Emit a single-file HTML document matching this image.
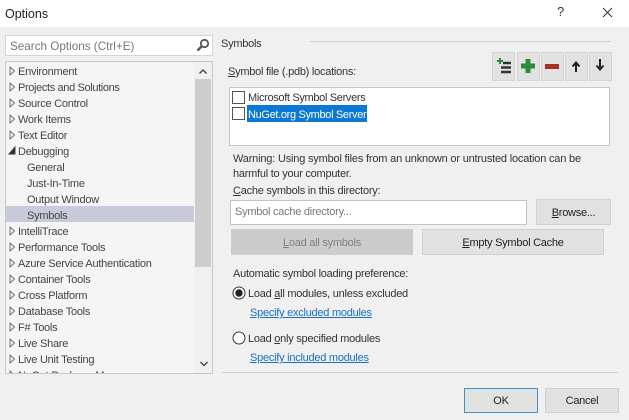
<!DOCTYPE html>
<html><head><meta charset="utf-8">
<style>
html,body{margin:0;padding:0}
body{width:629px;height:420px;position:relative;overflow:hidden;background:#f0f0f0;font-family:"Liberation Sans",sans-serif;font-size:11px;letter-spacing:-.25px;color:#333}
div,a,svg{position:absolute;box-sizing:border-box}
.t{white-space:nowrap;line-height:16px;height:16px;margin-top:1px}
.r{color:#444}
.btn{background:#e1e1e1;border:1px solid #d0d0d0;text-align:center;color:#222}
.tb{top:52px;height:29px;background:#e2e2e2;border:1px solid #d4d4d4}
a{color:#1a6fc0;text-decoration:underline;white-space:nowrap;line-height:16px;margin-top:1px}
u{text-decoration:underline}
</style></head>
<body>
<div style="left:0;top:0;width:629px;height:27px;background:#fff"></div>
<div class="t" style="left:5px;top:5px;font-size:12.5px;color:#222;letter-spacing:0">Options</div>
<div class="t" style="left:557px;top:3px;font-size:13px;color:#333;letter-spacing:0">?</div>
<svg style="left:602px;top:7px" width="11" height="11"><path d="M1 1L10 10M10 1L1 10" stroke="#333" stroke-width="1" fill="none"/></svg>

<div style="left:5px;top:35px;width:208px;height:21px;background:#fff;border:1px solid #d4d4d4"></div>
<div class="t" style="left:10px;top:38px;color:#777;font-size:11.7px;letter-spacing:0">Search Options (Ctrl+E)</div>
<svg style="left:196px;top:38px" width="14" height="14"><circle cx="8.5" cy="5.500" r="3.700" fill="none" stroke="#555" stroke-width="1.800"/><path d="M5.500 8.500L1.500 12.500" stroke="#555" stroke-width="2.400"/></svg>

<div style="left:5px;top:61px;width:208px;height:313px;background:#f5f5f5;border:1px solid #c8c8c8;overflow:hidden" id="tree">
<div style="left:0;top:144px;width:188px;height:16px;background:#c9cbdc"></div>
<div style="left:188px;top:0;width:18px;height:311px;background:#f0f0f0"></div>
<div style="left:189px;top:17px;width:16px;height:188px;background:#cdcdcd"></div>
<svg style="left:192px;top:6px" width="10" height="8"><path d="M1.500 5.500L5 2L8.500 5.500" stroke="#444" stroke-width="1.400" fill="none"/></svg>
<svg style="left:193px;top:298px" width="10" height="8"><path d="M1.500 2L5 5.500L8.500 2" stroke="#444" stroke-width="1.400" fill="none"/></svg>
<svg style="left:1px;top:0" width="12" height="320" fill="#f5f5f5" stroke="#666" stroke-width=".9"><path d="M3 5V13L7.500 9Z"/><path d="M3 21V29L7.500 25Z"/><path d="M3 37V45L7.500 41Z"/><path d="M3 53V61L7.500 57Z"/><path d="M3 69V77L7.500 73Z"/><path d="M8 85V92H2Z" fill="#333" stroke="#333"/><path d="M3 165V173L7.500 169Z"/><path d="M3 181V189L7.500 185Z"/><path d="M3 197V205L7.500 201Z"/><path d="M3 213V221L7.500 217Z"/><path d="M3 229V237L7.500 233Z"/><path d="M3 245V253L7.500 249Z"/><path d="M3 261V269L7.500 265Z"/><path d="M3 277V285L7.500 281Z"/><path d="M3 293V301L7.500 297Z"/><path d="M3 309V317L7.500 313Z"/></svg>
<div class="t r" style="left:12px;top:1px">Environment</div>
<div class="t r" style="left:12px;top:17px;letter-spacing:-.36px">Projects and Solutions</div>
<div class="t r" style="left:12px;top:33px">Source Control</div>
<div class="t r" style="left:12px;top:49px">Work Items</div>
<div class="t r" style="left:12px;top:65px">Text Editor</div>
<div class="t r" style="left:12px;top:81px">Debugging</div>
<div class="t r" style="left:21px;top:97px">General</div>
<div class="t r" style="left:21px;top:113px">Just-In-Time</div>
<div class="t r" style="left:21px;top:129px">Output Window</div>
<div class="t r" style="left:21px;top:145px">Symbols</div>
<div class="t r" style="left:12px;top:161px">IntelliTrace</div>
<div class="t r" style="left:12px;top:177px">Performance Tools</div>
<div class="t r" style="left:12px;top:193px">Azure Service Authentication</div>
<div class="t r" style="left:12px;top:209px">Container Tools</div>
<div class="t r" style="left:12px;top:225px">Cross Platform</div>
<div class="t r" style="left:12px;top:241px">Database Tools</div>
<div class="t r" style="left:12px;top:257px">F# Tools</div>
<div class="t r" style="left:12px;top:273px">Live Share</div>
<div class="t r" style="left:12px;top:289px">Live Unit Testing</div>
<div class="t r" style="left:12px;top:305px">NuGet Package Manager</div>
</div>

<div class="t" style="left:221px;top:35px">Symbols</div>
<div style="left:310px;top:41px;width:301px;height:1px;background:#cfcfcf"></div>
<div class="t" style="left:228px;top:63px"><u>S</u>ymbol file (.pdb) locations:</div>

<div class="tb" style="left:492px;width:23px"></div>
<div class="tb" style="left:517px;width:23px"></div>
<div class="tb" style="left:541px;width:23px"></div>
<div class="tb" style="left:565px;width:23px"></div>
<div class="tb" style="left:589px;width:23px"></div>
<svg style="left:492px;top:52px" width="120" height="29">
<path d="M5 9H11M8 6V12" stroke="#2d8a3a" stroke-width="2" fill="none"/>
<path d="M11 11H19M9 15.500H19M9 20H19" stroke="#333" stroke-width="2.500" fill="none"/>
<rect x="29" y="11.500" width="14" height="5" fill="#2e8b3a"/>
<rect x="33.500" y="7" width="5" height="14" fill="#2e8b3a"/>
<rect x="53" y="12" width="14" height="5" fill="#a83025"/>
<path d="M84 20V11M80.500 14.500L84 10.500L87.500 14.500" stroke="#222" stroke-width="2" fill="none"/>
<path d="M108 7V17M104.500 13.500L108 17.500L111.500 13.500" stroke="#222" stroke-width="2" fill="none"/>
</svg>

<div style="left:229px;top:87px;width:381px;height:59px;background:#fff;border:1px solid #c8c8c8"></div>
<div style="left:232px;top:91px;width:13px;height:13px;background:#fff;border:1px solid #555"></div>
<div style="left:232px;top:107px;width:13px;height:13px;background:#fff;border:1px solid #555"></div>
<div class="t" style="left:248px;top:89px;letter-spacing:-.33px">Microsoft Symbol Servers</div>
<div style="left:247px;top:105px;width:120px;height:17px;background:#0a78d4"></div>
<div class="t" style="left:248px;top:106px;color:#fff;letter-spacing:-.33px">NuGet.org Symbol Server</div>

<div class="t" style="left:233px;top:150px;letter-spacing:-.19px">Warning: Using symbol files from an unknown or untrusted location can be</div>
<div class="t" style="left:233px;top:165px">harmful to your computer.</div>
<div class="t" style="left:233px;top:182px"><u>C</u>ache symbols in this directory:</div>

<div style="left:230px;top:200px;width:297px;height:25px;background:#fff;border:1px solid #c4c4c4"></div>
<div class="t" style="left:235px;top:203px;color:#777">Symbol cache directory...</div>
<div class="btn" style="left:536px;top:199px;width:75px;height:26px;line-height:26px"><u>B</u>rowse...</div>
<div class="btn" style="left:231px;top:229px;width:182px;height:26px;line-height:26px;background:#cccccc;border-color:#cccccc;color:#808080"><u>L</u>oad all symbols</div>
<div class="btn" style="left:422px;top:229px;width:182px;height:26px;line-height:26px"><u>E</u>mpty Symbol Cache</div>

<div class="t" style="left:233px;top:265px">Automatic symbol loading preference:</div>
<svg style="left:232px;top:286px" width="14" height="14"><circle cx="7" cy="7" r="6" fill="#fff" stroke="#333" stroke-width="1"/><circle cx="7" cy="7" r="3.700" fill="#222"/></svg>
<div class="t" style="left:248px;top:285px">Load <u>a</u>ll modules, unless excluded</div>
<a href="#" style="left:250px;top:304px">Specify excluded modules</a>
<svg style="left:232px;top:331px" width="14" height="14"><circle cx="7" cy="7" r="6" fill="#fff" stroke="#333" stroke-width="1"/></svg>
<div class="t" style="left:248px;top:330px">Load <u>o</u>nly specified modules</div>
<a href="#" style="left:250px;top:349px">Specify included modules</a>
<div style="left:222px;top:372px;width:396px;height:1px;background:#cfcfcf"></div>

<div class="btn" style="left:464px;top:388px;width:74px;height:25px;line-height:25px;border:1.500px solid #3f8fc9">OK</div>
<div class="btn" style="left:545px;top:388px;width:74px;height:25px;line-height:25px">Cancel</div>
</body></html>
